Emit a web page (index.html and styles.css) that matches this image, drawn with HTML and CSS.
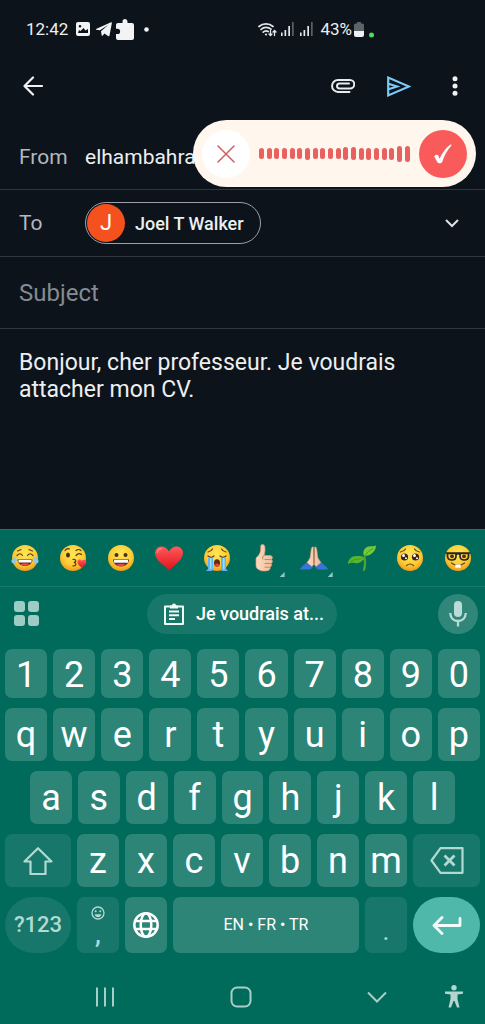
FILE: index.html
```
<!DOCTYPE html>
<html lang="fr">
<head>
<meta charset="utf-8">
<meta name="viewport" content="width=device-width, initial-scale=1">
<title>Compose</title>
<link rel="stylesheet" href="styles.css">
</head>
<body>
<svg class="defs" aria-hidden="true">
  <defs>
    <radialGradient id="face" cx="50%" cy="35%" r="65%">
      <stop offset="0" stop-color="#ffe75a"/><stop offset=".65" stop-color="#fccb33"/><stop offset="1" stop-color="#ee9b1c"/>
    </radialGradient>
    <linearGradient id="red" x1="0" y1="0" x2="0" y2="1">
      <stop offset="0" stop-color="#ff5a5a"/><stop offset="1" stop-color="#e0101c"/>
    </linearGradient>
    <linearGradient id="skin" x1="0" y1="0" x2="1" y2="0">
      <stop offset="0" stop-color="#fbdcc2"/><stop offset="1" stop-color="#eebb98"/>
    </linearGradient>
  </defs>
</svg>

<header class="status">
  <span class="clock">12:42</span>
  <svg class="s-image" width="14" height="14" viewBox="0 0 14 14"><path fill="#f1f3f4" fill-rule="evenodd" d="M2 0h10a2 2 0 0 1 2 2v10a2 2 0 0 1-2 2H2a2 2 0 0 1-2-2V2C0 .9.9 0 2 0zM2 11h10V7L9.500 8.500 7.500 6 4.500 9 3 8zM4 3a1.300 1.300 0 1 0 0 2.600A1.300 1.300 0 0 0 4 3z"/></svg>
  <svg class="s-plane" width="16" height="15" viewBox="0 0 16 15"><path fill="#f1f3f4" d="M0 7 15 .3c.6-.2 1 .1.900.8L13.500 13.500c-.2.900-.8 1-1.500.6L8.400 11.500 6.600 13.700c-.3.300-.8.200-.9-.2L5 9.200l7.500-6.400L4 8.200.2 7.800C-.1 7.600-.1 7.200 0 7z"/></svg>
  <svg class="s-puzzle" width="18" height="21" viewBox="0 0 18 21"><path fill="#f1f3f4" d="M2 4h4.500V2.500a2.500 2.500 0 0 1 5 0V4H16a2 2 0 0 1 2 2v13a2 2 0 0 1-2 2H2a2 2 0 0 1-2-2v-4h1.500a2.600 2.600 0 0 0 0-5.200H0V6c0-1.100.9-2 2-2z"/></svg>
  <svg class="s-dot" width="5" height="5" viewBox="0 0 5 5"><circle cx="2.500" cy="2.500" r="2.300" fill="#f1f3f4"/></svg>
  <span class="status-gap"></span>
  <svg width="19" height="15" viewBox="0 0 19 15" fill="none" stroke="#e4e7e9" stroke-width="1.700" stroke-linecap="round"><path d="M1 4.500a10.500 10.500 0 0 1 14 0M3 7.500a7.500 7.500 0 0 1 10-.3M5.200 10.200a4.200 4.200 0 0 1 5-.6"/><circle cx="8" cy="12.500" r="1.100" fill="#e4e7e9" stroke="none"/><path stroke-width="1.300" d="M12.500 8.500v5M11 12l1.500 1.600L14 12M16.500 13.500v-5M15 10l1.500-1.600L18 10"/></svg>
  <svg class="s-signal" width="13" height="14" viewBox="0 0 13 14"><path fill="#e4e7e9" d="M0 10.500h1.600V14H0zM3.500 8h1.700v6H3.500zM7.300 4H9v10H7.300z"/><path fill="#596066" d="M11 0h1.700v14H11z"/></svg>
  <svg class="s-signal2" width="13" height="14" viewBox="0 0 13 14"><path fill="#e4e7e9" d="M0 10.500h1.600V14H0zM3.500 8h1.700v6H3.500zM7.300 4H9v10H7.300z"/><path fill="#596066" d="M11 0h1.700v14H11z"/></svg>
  <span class="battery-text">43%</span>
  <svg width="10" height="15" viewBox="0 0 10 15"><path fill="#5d6468" d="M3 0h4v1.500h1.500A1.500 1.500 0 0 1 10 3v6H0V3a1.500 1.500 0 0 1 1.500-1.500H3z"/><path fill="#eef0f1" d="M0 9h10v4a2 2 0 0 1-2 2H2a2 2 0 0 1-2-2z"/></svg>
  <svg class="s-privacy" width="5" height="17" viewBox="0 0 5 17"><circle cx="2.500" cy="14" r="2.500" fill="#4cdb63"/></svg>
</header>

<main class="compose">
  <div class="toolbar">
    <button class="icon-btn" aria-label="Back"><svg width="20" height="20" viewBox="0 0 20 20" fill="none" stroke="#eef0f2" stroke-width="2.200" stroke-linecap="round" stroke-linejoin="round"><path d="M19 10H1.500M10 1.500 1.500 10l8.500 8.500"/></svg></button>
    <span class="toolbar-gap"></span>
    <button class="icon-btn" aria-label="Attach"><svg width="24" height="14" viewBox="0 0 24 14" fill="none" stroke="#e8eaec" stroke-width="2" stroke-linecap="round"><path d="M18.500 12.900H7A5.950 5.950 0 0 1 7 1h12a4.250 4.250 0 0 1 0 8.500H8.500a2.500 2.500 0 0 1 0-5H18"/></svg></button>
    <button class="icon-btn" aria-label="Send"><svg width="24" height="21" viewBox="0 0 24 21" fill="none" stroke="#7cc8f6" stroke-width="2.200"><path d="M1.200 1.600v17.800L22 10.500zM1.500 7.800l8.500 2.700-8.500 2.700"/></svg></button>
    <button class="icon-btn" aria-label="More options"><svg width="6" height="20" viewBox="0 0 6 20" fill="#eef0f2"><circle cx="3" cy="2.700" r="2.500"/><circle cx="3" cy="10" r="2.500"/><circle cx="3" cy="17.300" r="2.500"/></svg></button>
  </div>

  <div class="field from">
    <label for="from">From</label>
    <input id="from" type="text" value="elhambahra">
  </div>
  <div class="field to">
    <span class="field-label">To</span>
    <button class="chip"><span class="avatar">J</span><span>Joel T Walker</span></button>
    <span class="toolbar-gap"></span>
    <button class="icon-btn" aria-label="Show Cc and Bcc"><svg width="14" height="9" viewBox="0 0 14 9" fill="none" stroke="#dfe2e5" stroke-width="2"><path d="m1 1 6 6 6-6"/></svg></button>
  </div>
  <div class="field subject">
    <input type="text" placeholder="Subject" aria-label="Subject">
  </div>
  <textarea class="message" aria-label="Message" spellcheck="false">Bonjour, cher professeur. Je voudrais attacher mon CV.</textarea>

  <div class="dictation">
    <button class="cancel" aria-label="Cancel"><svg width="18" height="18" viewBox="0 0 18 18" stroke="#cf5e60" stroke-width="1.500" stroke-linecap="round"><path d="m1 1 16 16M17 1 1 17"/></svg></button>
    <div class="wave" aria-hidden="true"><i></i><i></i><i></i><i></i><i></i><i></i><i class="m"></i><i></i><i></i><i></i><i></i><i class="l"></i><i class="l"></i><i class="m"></i><i class="m"></i><i class="m"></i><i class="m"></i><i class="m"></i><i class="xl"></i><i class="xl"></i></div>
    <button class="accept" aria-label="Accept"><svg width="20" height="20" viewBox="0 0 20 20"><path fill="#fff" d="M1.200 12.500c.5-1.700 3.500-2.300 4-1l1.400 3.300C9 9.500 12.500 4 17.200.8c1-.6 1.700.2 1 1C14 6.500 11.200 12 9.200 18c-.5 1.500-4 1.800-4.600.5z"/></svg></button>
  </div>
</main>

<section class="keyboard" aria-label="Keyboard">
  <div class="emojis">
    <button aria-label="Tears of joy"><svg width="28" height="28" viewBox="0 0 28 28"><circle cx="14" cy="14" r="13" fill="url(#face)"/><path fill="none" stroke="#63401b" stroke-width="1.200" stroke-linecap="round" d="M6 11.500q3-3.500 5.500 0M16.500 11.500q2.500-3.500 5.500 0M6.500 7 10 5.500M18 5.500 21.500 7"/><path fill="#643119" d="M6.500 15.500h15c0 4-3.500 6.500-7.500 6.500s-7.500-2.500-7.500-6.500z"/><path fill="#fff" d="M7.500 16h13v2.500h-13z"/><path fill="#e9454b" d="M9.500 20.300q4.500-2 9 0-2 1.700-4.500 1.700t-4.500-1.700z"/><path fill="#8fc9e6" d="M5.500 13c-3 .5-5.500 2.500-5 4.700.5 2.300 4.500 2.200 5-.7zM22.500 13c3 .5 5.500 2.500 5 4.700-.5 2.300-4.500 2.200-5-.7z"/></svg></button>
    <button aria-label="Blowing a kiss"><svg width="28" height="28" viewBox="0 0 28 28"><circle cx="14" cy="14" r="13" fill="url(#face)"/><ellipse cx="9" cy="11" rx="2" ry="2.600" fill="#4e2e16"/><path fill="none" stroke="#5b3517" stroke-width="1.200" stroke-linecap="round" d="M6 6.500Q8 4 10.500 5M17 11.500q2.500-3 5.500-1M17 6.500q2.500-2 5 0M14 15.500c3-.5 4 2.500.8 3 3.200 0 2.500 4-.8 3.300"/><path fill="url(#red)" d="M22.500 24c-1-2-4.500-3.500-4-6.500.4-2.400 3-2.600 4.200-.6 1.600-1.800 4.400-1.200 4.600 1.200.2 2.600-3.500 3.600-4.800 5.900z"/></svg></button>
    <button aria-label="Grinning"><svg width="28" height="28" viewBox="0 0 28 28"><circle cx="14" cy="14" r="13" fill="url(#face)"/><circle cx="9.500" cy="11" r="2" fill="#4e2e16"/><circle cx="18.500" cy="11" r="2" fill="#4e2e16"/><path fill="#643119" d="M6 15.500h16c0 4-3.500 7-8 7s-8-3-8-7z"/><path fill="#fff" d="M7 16h14v2.700H7z"/><path fill="#e9454b" d="M9.500 20.700q4.500-2 9 0-2 1.700-4.500 1.700t-4.500-1.700z"/></svg></button>
    <button aria-label="Red heart"><svg width="30" height="28" viewBox="0 0 30 28"><path fill="url(#red)" d="M15 27C11 21 1 17 1 9c0-4 3-6.500 6.500-6.500 3.300 0 6 2 7.500 5 1.500-3 4.200-5 7.500-5C26 2.500 29 5 29 9c0 8-10 12-14 18z"/><path fill="none" stroke="#ff8585" stroke-width="1.500" stroke-linecap="round" d="M3.500 8.500Q4 5 7.500 4.800"/></svg></button>
    <button aria-label="Loudly crying"><svg width="28" height="28" viewBox="0 0 28 28"><circle cx="14" cy="14" r="13" fill="url(#face)"/><path fill="none" stroke="#63401b" stroke-width="1.200" stroke-linecap="round" d="M5 12q3 2.500 6 0M17 12q3 2.500 6 0M5 8q3-.5 4.500-3M18.500 5Q20 7.500 23 8"/><path fill="#5eb8ee" d="M5 14h5v11c0 1.500-1 2-2.500 2H3q1-1 2-2zM18 14h5v11q1 1 2 2h-4.500c-1.500 0-2.500-.5-2.500-2z"/><path fill="#a3dcfa" d="M7 14h1.500v11H7zM20 14h1.500v11H20z"/><ellipse cx="14" cy="19" rx="3" ry="3.700" fill="#642a18"/><ellipse cx="14" cy="21" rx="2" ry="1.500" fill="#e9454b"/></svg></button>
    <button class="tone" aria-label="Thumbs up"><svg width="28" height="30" viewBox="2 0 28 28"><path fill="url(#skin)" stroke="#d79d78" stroke-width=".7" d="M6 14c2-2 4-4 4.500-7l.3-5c.2-2 3.500-2 4 .5.500 3 .2 6-.7 9l6.200 0c2.500.2 2.800 3.500.8 4 2 .8 1.600 3.600-.2 4 1.400 1 .8 3.300-1 3.700.8 1.800-.5 3.300-2.500 3.500-3.500.5-6.600.3-8.500-1-2-.8-3-2.500-2.900-5z"/><path fill="none" stroke="#c7845f" stroke-width="1" stroke-linecap="round" d="M14 11.500c-1.500.5-2 2-1 3.500M15 15.500h5.500M15 19.500h5M15 23.200h4"/></svg></button>
    <button class="tone" aria-label="Folded hands"><svg width="30" height="28" viewBox="0 0 30 28"><path fill="url(#skin)" stroke="#c98d6b" stroke-width=".6" d="M14.500 3c-1.800-.5-2.200 1-2.400 3L11 14l-4 6 5 4 3-4zM15.500 3c1.800-.5 2.200 1 2.400 3L19 14l4 6-5 4-3-4z"/><path stroke="#a96c50" stroke-width="1" d="M15 4v16"/><path fill="#3974d7" d="m8 18.500 6 5-3 2H1c.5-2.500 3.500-4 7-7zM22 18.500l-6 5 3 2h10c-.5-2.500-3.500-4-7-7z"/></svg></button>
    <button aria-label="Seedling"><svg width="30" height="28" viewBox="0 0 30 28"><path fill="none" stroke="#4da52d" stroke-width="2.200" stroke-linecap="round" d="M17 26c2-6 1-10 .5-13M16.500 15q-1.500-3-5-2"/><path fill="#72cb35" d="M17 12c-2-5 1-9 5-9.500 3-.5 5 .2 7-1C29 7 24 12 17 12z"/><path fill="#58b72d" d="M16.500 15c-2.500 4-6 5-9 4C5 18.500 3 19 1 20c0-7 9-11 15.500-5z"/><path fill="none" stroke="#3c9423" stroke-width=".8" d="M17.500 12Q21 6.500 26 4.500M3 18q5-4 11-3"/></svg></button>
    <button aria-label="Pleading"><svg width="28" height="28" viewBox="0 0 28 28"><circle cx="14" cy="14" r="13" fill="url(#face)"/><path fill="none" stroke="#6b421a" stroke-width="1.200" stroke-linecap="round" d="M4.500 8Q8 7.500 9.500 5M18.500 5Q20 7.500 23.500 8M10.500 21.500q3.500-3 7 0"/><g fill="#3f2418"><circle cx="8.500" cy="13" r="3.600"/><circle cx="19.500" cy="13" r="3.600"/></g><g fill="#fff"><circle cx="7.500" cy="11.500" r="1.500"/><circle cx="18.500" cy="11.500" r="1.500"/><circle cx="10" cy="14.300" r="1"/><circle cx="21" cy="14.300" r="1"/></g></svg></button>
    <button aria-label="Nerd"><svg width="28" height="28" viewBox="0 0 28 28"><circle cx="14" cy="14" r="13" fill="url(#face)"/><path fill="none" stroke="#29251f" stroke-width="1.700" d="M1.500 9h25M3.500 9.500h8.500v2.500q0 4-4.200 4T3.500 12zM16 9.500h8.500V12q0 4-4.200 4T16 12zM12 10.500q2-1.500 4 0"/><circle cx="8" cy="12.300" r="1.900" fill="#4e2e16"/><circle cx="20" cy="12.300" r="1.900" fill="#4e2e16"/><path fill="none" stroke="#70421b" stroke-width="1.300" stroke-linecap="round" d="M7.500 19q6.500 5 13 0"/><path fill="#fff" d="M11.300 20.500h5.400v3q-1.300.7-2.700 0-1.400.7-2.700 0z"/></svg></button>
  </div>

  <div class="suggest">
    <button class="apps" aria-label="Keyboard tools"><svg width="25" height="25" viewBox="0 0 25 25" fill="#9cccc3"><rect width="11" height="11" rx="3"/><rect x="14" width="11" height="11" rx="3"/><rect y="14" width="11" height="11" rx="3"/><rect x="14" y="14" width="11" height="11" rx="3"/></svg></button>
    <button class="paste"><svg width="20" height="22" viewBox="0 0 20 22" fill="none" stroke="#f3fbf9" stroke-width="2" stroke-linejoin="round"><path d="M1 3.500h18V21H1zM5 8.500h10M5 12.300h10M5 16h6"/><path fill="#f3fbf9" stroke="none" d="M6 2.500h2a2 2 0 0 1 4 0h2v3H6z"/></svg><span>Je voudrais at...</span></button>
    <button class="mic" aria-label="Voice input"><svg width="18" height="26" viewBox="0 0 18 26"><rect x="5" y="0" width="8" height="16" rx="4" fill="#b9dcd6"/><path fill="none" stroke="#b9dcd6" stroke-width="2.300" d="M1.200 12c.3 5 3.500 8 7.800 8s7.500-3 7.800-8M9 20v5.500"/></svg></button>
  </div>

  <div class="keys">
    <div class="row numbers"><button>1</button><button>2</button><button>3</button><button>4</button><button>5</button><button>6</button><button>7</button><button>8</button><button>9</button><button>0</button></div>
    <div class="row"><button>q</button><button>w</button><button>e</button><button>r</button><button>t</button><button>y</button><button>u</button><button>i</button><button>o</button><button>p</button></div>
    <div class="row home"><button>a</button><button>s</button><button>d</button><button>f</button><button>g</button><button>h</button><button>j</button><button>k</button><button>l</button></div>
    <div class="row shift-row">
      <button class="dim" aria-label="Shift"><svg width="30" height="28" viewBox="0 0 30 28" fill="none" stroke="#b2dad3" stroke-width="2.200" stroke-linejoin="round"><path d="M15 1.200 1.500 14.500h6V27h15V14.500h6z"/></svg></button>
      <button>z</button><button>x</button><button>c</button><button>v</button><button>b</button><button>n</button><button>m</button>
      <button class="dim" aria-label="Backspace"><svg width="34" height="27" viewBox="0 0 34 27" fill="none" stroke="#b2dad3" stroke-width="2.200" stroke-linejoin="round"><path d="M10.500 1.200h22v24.600h-22L1.500 13.500z"/><path stroke-width="2.800" d="m14.500 8.500 10 10M24.500 8.500l-10 10"/></svg></button>
    </div>
    <div class="row bottom-row">
      <button class="dim round symbols">?123</button>
      <button class="dim comma"><svg width="14" height="14" viewBox="0 0 14 14" fill="none" stroke="#b2dad3" stroke-width="1.300"><circle cx="7" cy="7" r="6"/><path fill="#b2dad3" stroke="none" d="M3.500 8.300h7q-1 3-3.500 3t-3.500-3z"/><g fill="#b2dad3" stroke="none"><circle cx="4.700" cy="5.200" r="1"/><circle cx="9.300" cy="5.200" r="1"/></g></svg><span>,</span></button>
      <button aria-label="Change language"><svg width="26" height="26" viewBox="0 0 26 26" fill="none" stroke="#fff" stroke-width="2.500"><circle cx="13" cy="13" r="11.700"/><ellipse cx="13" cy="13" rx="5.300" ry="11.700"/><path d="M2.300 9h21.400M2.300 17h21.400"/></svg></button>
      <button class="space">EN • FR • TR</button>
      <button class="dim period">.</button>
      <button class="round enter" aria-label="Enter"><svg width="30" height="19" viewBox="0 0 30 19" fill="none" stroke="#f2fcfa" stroke-width="2.800" stroke-linecap="round" stroke-linejoin="round"><path d="M28 2.500v7H2M10 1.500l-8 8 8 8"/></svg></button>
    </div>
  </div>

  <nav class="nav">
    <button aria-label="Recent apps"><svg width="20" height="20" viewBox="0 0 20 20" stroke="#a9cec8" stroke-width="2"><path d="M2 .5v19M10 .5v19M18 .5v19"/></svg></button>
    <button aria-label="Home"><svg width="22" height="22" viewBox="0 0 22 22" fill="none" stroke="#a9cec8" stroke-width="2"><rect x="1.500" y="1.500" width="19" height="19" rx="5.500"/></svg></button>
    <button aria-label="Hide keyboard"><svg width="20" height="12" viewBox="0 0 20 12" fill="none" stroke="#a9cec8" stroke-width="2"><path d="m1 1.500 9 9 9-9"/></svg></button>
    <button aria-label="Accessibility"><svg width="18" height="23" viewBox="0 0 18 23" fill="#b5d6d0"><circle cx="9" cy="2.700" r="2.700"/><path d="M0 6.500h18v2.200l-5.500.8v4.500l2 8.500H12L9.500 16h-1L6 22.500H3.500l2-8.500V9.500L0 8.700z"/></svg></button>
  </nav>
</section>
</body>
</html>
```
FILE: styles.css
```
* { box-sizing: border-box; }

body {
  margin: 0;
  min-height: 100vh;
  display: flex;
  flex-direction: column;
  background: #0c131a;
  color: #eceff1;
  font-family: Roboto, "Liberation Sans", sans-serif;
}

button, input, textarea {
  margin: 0;
  padding: 0;
  border: 0;
  background: none;
  color: inherit;
  font: inherit;
  outline: 0;
}

svg { display: block; flex: none; }
.defs { position: absolute; width: 0; height: 0; }

.status {
  display: flex;
  align-items: center;
  height: 58px;
  padding: 0 111px 0 26px;
  font-size: 17px;
}
.s-image { margin-left: 8px; }
.s-plane { margin-left: 6px; }
.s-puzzle { margin-left: 4px; }
.s-dot { margin-left: 10px; }
.s-signal { margin-left: 4px; }
.s-signal2 { margin-left: 6px; }
.s-privacy { margin-left: 5px; }
.battery-text { margin: 0 2px 0 7px; }
.status-gap, .toolbar-gap { flex: 1; }

.compose {
  position: relative;
  flex: 1;
  display: flex;
  flex-direction: column;
}

.toolbar {
  display: flex;
  align-items: center;
  height: 56px;
  padding: 0 10px 0 13px;
}
.icon-btn {
  display: flex;
  align-items: center;
  justify-content: center;
  width: 40px;
  height: 40px;
}
.toolbar .icon-btn + .icon-btn { margin-left: 16px; }

.field {
  display: flex;
  align-items: center;
  padding: 0 13px 0 19px;
  border-bottom: 1px solid #30373c;
}
.field label, .field-label {
  width: 66px;
  color: #b3b9c1;
  font-size: 21px;
}
.field input { flex: 1; min-width: 0; }
.from {
  height: 67px;
  margin-top: 9px;
  padding-top: 2px;
  font-size: 21px;
}
.to { height: 67px; }

.chip {
  display: flex;
  align-items: center;
  gap: 10px;
  height: 42px;
  padding: 0 16px 0 1px;
  border: 1px solid #9aa0a6;
  border-radius: 21px;
  font-size: 18px;
  font-weight: 500;
}
.avatar {
  width: 38px;
  height: 38px;
  border-radius: 50%;
  background: #f4511e;
  color: #fff;
  font-size: 22px;
  font-weight: 400;
  line-height: 38px;
  text-align: center;
}

.subject { height: 72px; font-size: 24px; }
.subject input::placeholder { color: #858b91; opacity: 1; }

.message {
  flex: 1;
  width: 100%;
  padding: 20px 19px 0;
  resize: none;
  font-size: 23px;
  line-height: 27px;
}

.dictation {
  position: absolute;
  top: 62px;
  right: 9px;
  display: flex;
  align-items: center;
  gap: 9px;
  width: 283px;
  height: 67px;
  padding: 0 9px;
  border-radius: 34px;
  background: #fff7ee;
}
.cancel, .accept {
  display: flex;
  align-items: center;
  justify-content: center;
  flex: none;
  width: 48px;
  height: 48px;
  border-radius: 50%;
}
.cancel { background: #fff; }
.accept { background: #f95a5a; }
.wave {
  flex: 1;
  display: flex;
  align-items: center;
  justify-content: space-between;
}
.wave i {
  width: 5px;
  height: 11px;
  border-radius: 3px;
  background: #e8605f;
}
.wave .m { height: 12px; }
.wave .l { height: 13px; }
.wave .xl { height: 16px; }

.keyboard {
  border-top: 1px solid #2b6f66;
  background: #006a5b;
  color: #fff;
}

.emojis {
  display: grid;
  grid-template-columns: repeat(10, 1fr);
  column-gap: 6px;
  height: 57px;
  padding: 0 6px 0 4px;
  border-bottom: 1px solid #1c7a6c;
}
.emojis button {
  position: relative;
  display: flex;
  align-items: center;
  justify-content: center;
}
.tone::after {
  content: "";
  position: absolute;
  right: 2px;
  bottom: 9px;
  width: 5px;
  height: 5px;
  background: #8fc9bf;
  clip-path: polygon(100% 0, 100% 100%, 0 100%);
}

.suggest {
  display: grid;
  grid-template-columns: 1fr auto 1fr;
  align-items: center;
  height: 53px;
  padding: 0 7px 0 6px;
}
.apps { justify-self: start; padding: 8px; }
.paste {
  display: flex;
  align-items: center;
  gap: 12px;
  height: 40px;
  padding: 0 13px 0 17px;
  border-radius: 20px;
  background: #17786a;
  font-size: 18px;
  font-weight: 500;
}
.mic {
  justify-self: end;
  display: flex;
  align-items: center;
  justify-content: center;
  width: 40px;
  height: 40px;
  border-radius: 50%;
  background: #31867a;
}

.keys {
  display: grid;
  row-gap: 10px;
  padding: 9px 5px 0;
}
.row {
  display: grid;
  grid-template-columns: repeat(10, minmax(0, 1fr));
  column-gap: 6px;
  height: 53px;
}
.numbers { height: 49px; }
.home {
  grid-template-columns: repeat(9, minmax(0, 1fr));
  padding: 0 25px;
}
.shift-row { grid-template-columns: 66fr repeat(7, 42fr) 67fr; }
.bottom-row { grid-template-columns: 66fr 42fr 42fr 186fr 42fr 67fr; height: 56px; }
.row button {
  display: flex;
  align-items: center;
  justify-content: center;
  min-width: 0;
  border-radius: 7px;
  background: #2d8578;
  font-size: 36px;
  line-height: 40px;
}
.row.numbers button { padding-top: 2px; }
.row .dim { background: #17776a; color: #b2dad3; }
.row .round { border-radius: 28px; }
.row .symbols { font-size: 22px; font-weight: 500; }
.row .space { font-size: 16px; }
.row .enter { background: #50b7ab; }
.row .comma {
  flex-direction: column;
  padding-top: 4px;
  font-size: 26px;
  font-weight: 500;
  line-height: 28px;
}
.row .period {
  align-items: flex-end;
  padding-bottom: 8px;
  font-size: 26px;
  line-height: 28px;
}

.nav {
  display: grid;
  grid-template-columns: 91fr 181fr 91fr 62fr;
  height: 71px;
  padding: 16px 0 0 59px;
}
.nav button {
  display: flex;
  align-items: center;
  justify-content: center;
}
```
